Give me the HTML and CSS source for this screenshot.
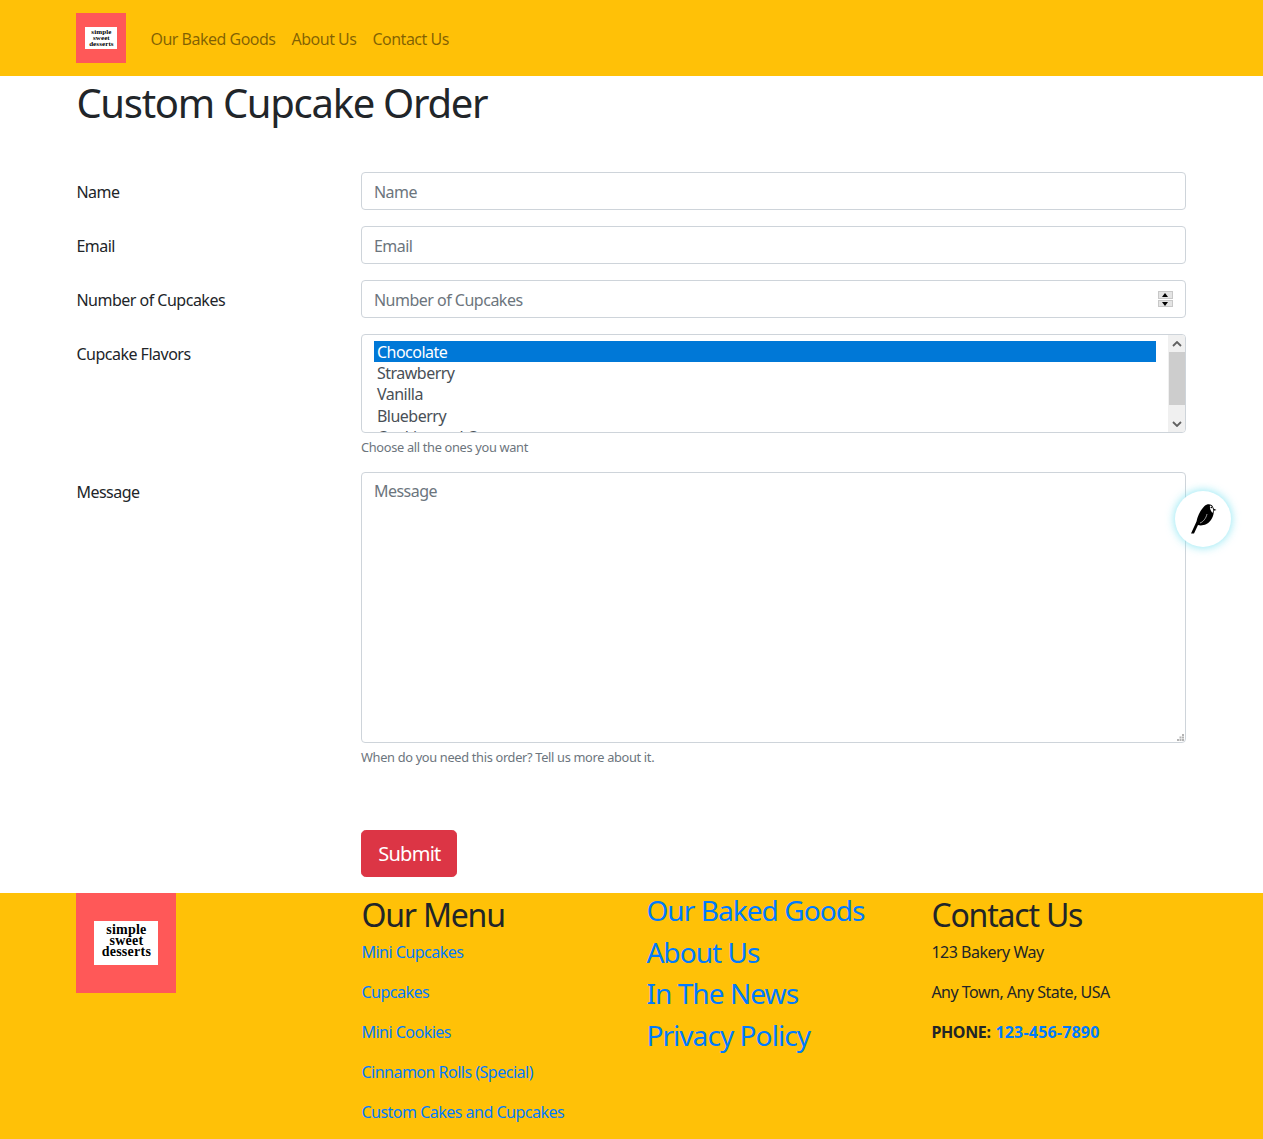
FILE: index.html
```html
<!DOCTYPE html>
<html lang="en">
<head>
<meta charset="utf-8">
<title>Custom Cupcake Order</title>
<link rel="stylesheet" href="styles.css">
</head>
<body>
<header class="navbar">
  <div class="container nav-inner">
    <a class="logo logo-small" href="#"><span class="logo-card">simple<br>sweet<br>desserts</span></a>
    <nav class="nav-links">
      <a href="#">Our Baked Goods</a>
      <a href="#">About Us</a>
      <a href="#">Contact Us</a>
    </nav>
  </div>
</header>
<main class="container">
  <h1 class="page-title">Custom Cupcake Order</h1>
  <form class="form">
    <div class="row">
      <label class="label" for="name">Name</label>
      <div class="field"><input class="control" id="name" placeholder="Name"></div>
    </div>
    <div class="row">
      <label class="label" for="email">Email</label>
      <div class="field"><input class="control" id="email" placeholder="Email"></div>
    </div>
    <div class="row">
      <label class="label" for="count">Number of Cupcakes</label>
      <div class="field number-field">
        <input class="control" id="count" placeholder="Number of Cupcakes">
        <span class="spinner"><i class="spin-up"></i><i class="spin-down"></i></span>
      </div>
    </div>
    <div class="row row-help">
      <span class="label">Cupcake Flavors</span>
      <div class="field">
        <div class="listbox" role="listbox">
          <div class="options">
            <div class="option selected">Chocolate</div>
            <div class="option">Strawberry</div>
            <div class="option">Vanilla</div>
            <div class="option">Blueberry</div>
            <div class="option">Cookies and Cream</div>
          </div>
          <div class="scrollbar">
            <span class="arrow-box"><svg viewBox="0 0 10 6" width="10" height="6"><path d="M1 5l4-4 4 4" fill="none" stroke="#606060" stroke-width="1.8"/></svg></span>
            <span class="thumb"></span>
            <span class="arrow-box arrow-end"><svg viewBox="0 0 10 6" width="10" height="6"><path d="M1 1l4 4 4-4" fill="none" stroke="#606060" stroke-width="1.8"/></svg></span>
          </div>
        </div>
        <small class="help">Choose all the ones you want</small>
      </div>
    </div>
    <div class="row row-help">
      <label class="label" for="message">Message</label>
      <div class="field">
        <div class="textarea-wrap">
          <textarea class="control textarea" id="message" placeholder="Message"></textarea>
          <svg class="grip" viewBox="0 0 8 8" width="8" height="8"><path d="M5 0h2v2H5zM2.500 2.500h2v2h-2zM5 2.500h2v2H5zM0 5h2v2H0zM2.500 5h2v2h-2zM5 5h2v2H5z" fill="#b4b4b4"/></svg>
        </div>
        <small class="help">When do you need this order? Tell us more about it.</small>
      </div>
    </div>
    <div class="row row-submit">
      <span class="label"></span>
      <div class="field"><button class="submit" type="button">Submit</button></div>
    </div>
  </form>
</main>
<a class="userback" href="#" aria-label="Wagtail">
  <svg viewBox="0 0 34 38" width="34" height="38">
    <path d="M5 33.500L10.500 21.500C11.500 16 14.500 10 18.500 6 20.500 4 23.500 3.500 25.500 5 26.800 6 27.300 7.500 27.800 8.800L30.500 10 27.800 10.800C27.800 16 25.500 21.500 20.500 24 17 25.700 14 25.600 12 25L8 33.500z" fill="#000"/>
    <path d="M24 5.500C26 6 27 8 27.300 10.500L26.500 13C25 11.500 23.500 8.500 24 5.500z" fill="#fff"/>
    <circle cx="25.300" cy="7.500" r=".8" fill="#000"/>
    <path d="M14 23C17 22 20 18.500 21 14" fill="none" stroke="#fff" stroke-width=".6"/>
  </svg>
</a>
<footer class="footer">
  <div class="container footer-grid">
    <div class="footer-col">
      <a class="logo logo-large" href="#"><span class="logo-card">simple<br>sweet<br>desserts</span></a>
    </div>
    <div class="footer-col">
      <h2 class="footer-title">Our Menu</h2>
      <p class="footer-line"><a href="#">Mini Cupcakes</a></p>
      <p class="footer-line"><a href="#">Cupcakes</a></p>
      <p class="footer-line"><a href="#">Mini Cookies</a></p>
      <p class="footer-line"><a href="#">Cinnamon Rolls (Special)</a></p>
      <p class="footer-line last"><a href="#">Custom Cakes and Cupcakes</a></p>
    </div>
    <div class="footer-col footer-col-big">
      <h3 class="footer-big"><a href="#">Our Baked Goods</a></h3>
      <h3 class="footer-big"><a href="#">About Us</a></h3>
      <h3 class="footer-big"><a href="#">In The News</a></h3>
      <h3 class="footer-big"><a href="#">Privacy Policy</a></h3>
    </div>
    <div class="footer-col">
      <h2 class="footer-title">Contact Us</h2>
      <p class="footer-line">123 Bakery Way</p>
      <p class="footer-line">Any Town, Any State, USA</p>
      <p class="footer-line"><strong class="phone">PHONE: <a href="#">123-456-7890</a></strong></p>
    </div>
  </div>
</footer>
</body>
</html>
```
FILE: styles.css
```css
* { box-sizing: border-box; }
html, body { margin: 0; padding: 0; }
body {
  height: 1139px;
  overflow: hidden;
  position: relative;
  background: #fff;
  color: #212529;
  font: 400 16px/24px "Noto Sans", "Open Sans", sans-serif;
  letter-spacing: -0.5px;
}
a { color: #007bff; text-decoration: none; }
.container { width: 1140px; margin: 0 0 0 61.4px; padding: 0 15px; }

.navbar { height: 76px; background: #ffc107; }
.nav-inner { display: flex; align-items: flex-start; padding-top: 13px; }
.logo { display: flex; align-items: center; justify-content: center; background: #ff5858; flex: none; }
.logo-card {
  display: block; background: #fff; color: #000; text-align: center;
  font-family: "Liberation Serif", serif; font-weight: 700; letter-spacing: 0;
}
.logo-small { width: 50px; height: 50px; }
.logo-small .logo-card { width: 32px; height: 22px; font-size: 7px; line-height: 6px; padding-top: 2px; letter-spacing: .1px; }
.logo-large { width: 100px; height: 100px; }
.logo-large .logo-card { width: 64px; height: 44px; font-size: 14px; line-height: 11px; padding-top: 3px; letter-spacing: .25px; }
.nav-links { display: flex; gap: 16px; margin-left: 24px; padding-top: 14px; }
.nav-links a { color: rgba(0, 0, 0, .5); }

.page-title { margin: 3px 0 45px; font-size: 40px; line-height: 48px; font-weight: 400; letter-spacing: -1.3px; }

.row { display: flex; margin-bottom: 16px; }
.row-help { margin-bottom: 0; }
.row-submit { margin-top: 48px; margin-bottom: 16px; }
.label { width: 285px; flex: none; padding-top: 8px; }
.field { flex: 1; min-width: 0; position: relative; }
.control {
  display: block; width: 100%; height: 38px; padding: 7px 12px 5px 11.5px;
  border: 1px solid #ced4da; border-radius: 4px; background: #fff; color: #495057;
  font: inherit; letter-spacing: inherit; outline: none;
}
.control::placeholder { color: #6c757d; opacity: 1; }
.textarea-wrap { position: relative; }
.textarea { height: 271px; padding-top: 6px; resize: none; }
.grip { position: absolute; right: 1px; bottom: 1px; }

.spinner {
  position: absolute; right: 13px; top: 11px; width: 15px; height: 16px;
  display: flex; flex-direction: column; gap: 1px; background: #fff;
}
.spinner i { flex: 1; background: #e4e4e4; position: relative; border: 1px solid #c8c8c8; }
.spinner i::after {
  content: ""; position: absolute; left: 3px; width: 0; height: 0;
  border-left: 3.5px solid transparent; border-right: 3.5px solid transparent;
}
.spin-up::after { top: 1px; border-bottom: 4px solid #000; }
.spin-down::after { top: 1px; border-top: 4px solid #000; }

.listbox {
  display: flex; height: 99px; overflow: hidden;
  border: 1px solid #ced4da; border-radius: 4px; background: #fff;
}
.options { flex: 1; min-width: 0; padding: 6px 12px 0; overflow: hidden; color: #495057; }
.option { height: 21.4px; line-height: 21.4px; padding: 0.5px 3px 0 2.5px; white-space: nowrap; }
.option.selected { background: #0078d7; color: #fff; }
.scrollbar { width: 17px; flex: none; background: #f0f0f0; display: flex; flex-direction: column; align-items: center; }
.arrow-box { height: 17px; display: flex; align-items: center; justify-content: center; flex: none; }
.arrow-end { margin-top: auto; }
.arrow-box svg { display: block; }
.thumb { width: 16px; height: 53px; background: #cdcdcd; flex: none; }
.help {
  display: block; height: 39px; padding-top: 5px; margin-left: -0.4px;
  font-size: 12.8px; line-height: 19px; color: #6c757d; letter-spacing: -0.32px;
}

.submit {
  display: block; width: 96px; height: 47px; padding: 0;
  background: #dc3545; color: #fff; border: 1px solid #dc3545; border-radius: 4.8px;
  font: inherit; font-size: 20px; letter-spacing: -0.7px;
}

.userback {
  position: absolute; left: 1175px; top: 491px; width: 56px; height: 56px;
  display: flex; align-items: center; justify-content: center;
  background: #fff; border-radius: 50%; box-shadow: 0 0 8px 1px rgba(120, 225, 240, .75);
}

.footer { background: #ffc107; height: 246px; }
.footer-grid { display: grid; grid-template-columns: repeat(4, 285px); }
.footer-col { min-width: 0; }
.footer-col-big { padding-top: 1px; }
.footer-title { margin: 3px 0 6px; font-size: 32px; line-height: 38.4px; font-weight: 400; letter-spacing: -1.2px; }
.footer-line { margin: 0 0 16px; }
.footer-line.last { margin-bottom: 0; }
.footer-big { margin: 0 0 8px; font-size: 28px; line-height: 33.6px; font-weight: 400; letter-spacing: -0.93px; }
.phone { letter-spacing: -0.35px; }
.phone a { letter-spacing: .2px; margin-left: 1px; }
```
